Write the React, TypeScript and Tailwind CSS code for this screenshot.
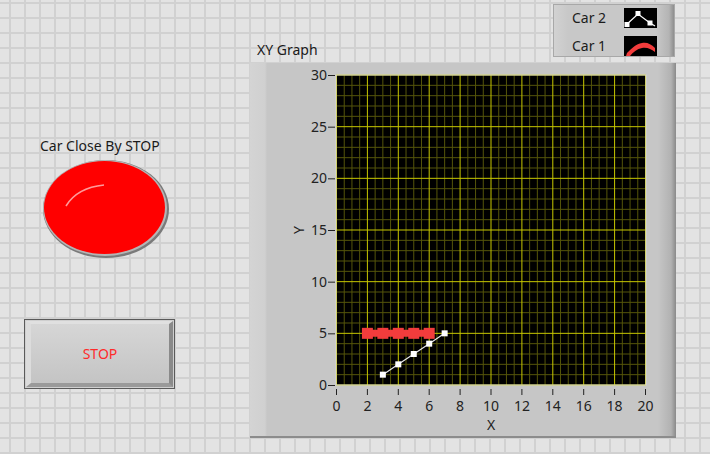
import React from "react";

const X = (v: number) => 336.5 + v * 15.45;
const Y = (v: number) => 385 - v * 10.333;

const car1 = [2, 3, 4, 5, 6].map((x) => [x, 5]);
const car2 = [
  [3, 1],
  [4, 2],
  [5, 3],
  [6, 4],
  [7, 5],
];

function Plot() {
  const minorX = Array.from({ length: 41 }, (_, i) => i * 0.5);
  const minorY = Array.from({ length: 31 }, (_, i) => i);
  const yTicks = [0, 5, 10, 15, 20, 25, 30];
  const xTicks = [0, 2, 4, 6, 8, 10, 12, 14, 16, 18, 20];
  return (
    <svg
      className="absolute inset-0"
      width={424}
      height={374}
      viewBox="250 63 424 374"
      style={{ fontFamily: '"Noto Sans", "Open Sans", sans-serif' }}
    >
      <rect x={336} y={75} width={310} height={310} fill="#000" />
      {minorX.map((v) =>
        v % 2 === 0 ? null : (
          <line key={"mx" + v} x1={X(v)} x2={X(v)} y1={75} y2={385} stroke="#55550a" strokeWidth={1} />
        )
      )}
      {minorY.map((v) =>
        v % 5 === 0 ? null : (
          <line key={"my" + v} y1={Y(v)} y2={Y(v)} x1={336} x2={646} stroke="#55550a" strokeWidth={1} />
        )
      )}
      {xTicks.map((v) => (
        <line key={"Mx" + v} x1={X(v)} x2={X(v)} y1={75} y2={385} stroke="#c8c800" strokeWidth={1} />
      ))}
      {yTicks.map((v) => (
        <line key={"My" + v} y1={Y(v)} y2={Y(v)} x1={336} x2={646} stroke="#c8c800" strokeWidth={1} />
      ))}
      <rect x={336} y={75} width={310} height={310} fill="none" stroke="#d8d8d8" strokeWidth={1} />

      {/* Car 1 */}
      <polyline
        points={car1.map(([x, y]) => `${X(x)},${Y(y)}`).join(" ")}
        fill="none"
        stroke="#f23c3c"
        strokeWidth={7}
      />
      {car1.map(([x, y]) => (
        <rect key={"c1" + x} x={X(x) - 5.5} y={Y(y) - 5.5} width={11} height={11} fill="#f23c3c" />
      ))}

      {/* Car 2 */}
      <polyline
        points={car2.map(([x, y]) => `${X(x)},${Y(y)}`).join(" ")}
        fill="none"
        stroke="#e8e8e8"
        strokeWidth={1.2}
      />
      {car2.map(([x, y]) => (
        <rect key={"c2" + x} x={X(x) - 3} y={Y(y) - 3} width={6} height={6} fill="#fff" />
      ))}

      {/* Y axis */}
      {yTicks.map((v) => (
        <g key={"yt" + v}>
          <line x1={328} x2={335} y1={Y(v) + 0.5} y2={Y(v) + 0.5} stroke="#222" strokeWidth={1} />
          <text x={327} y={Y(v) + 5} fontSize={14} textAnchor="end" fill="#222">
            {v}
          </text>
        </g>
      ))}
      {/* X axis */}
      {xTicks.map((v) => (
        <g key={"xt" + v}>
          <line x1={X(v)} x2={X(v)} y1={389} y2={395} stroke="#222" strokeWidth={1} />
          <text x={X(v)} y={411} fontSize={14} textAnchor="middle" fill="#222">
            {v}
          </text>
        </g>
      ))}
      <text x={491} y={430} fontSize={14} textAnchor="middle" fill="#222">
        X
      </text>
      <text
        x={298}
        y={230}
        fontSize={14}
        textAnchor="middle"
        dominantBaseline="central"
        fill="#222"
        transform="rotate(-90 298 230)"
      >
        Y
      </text>
    </svg>
  );
}

function Legend() {
  return (
    <div className="absolute left-[553px] top-[4px] w-[122px] h-[53px] border border-[#a8a8a8] [background-image:linear-gradient(to_right,#d2d2d2_0,#c8c8c8_14px,#c8c8c8_calc(100%-18px),#b4b4b4_calc(100%-5px),#8e8e8e_100%)] flex flex-col pl-[18px] pr-[17px] pt-[2px] gap-[7px]">
      <div className="flex items-center justify-between h-[21px]">
        <span className="text-[14px] text-[#1c1c1c]">Car 2</span>
        <svg width={33} height={20} viewBox="0 0 33 20">
          <rect width={33} height={20} fill="#000" />
          <polyline points="2,17 14,6 26,15 31,18" fill="none" stroke="#fff" strokeWidth={1.2} />
          <rect x={0.5} y={14} width={5} height={5} fill="#fff" />
          <rect x={11.5} y={3} width={5} height={5} fill="#fff" />
          <rect x={23.5} y={12.5} width={5} height={5} fill="#fff" />
        </svg>
      </div>
      <div className="flex items-center justify-between h-[21px]">
        <span className="text-[14px] text-[#1c1c1c]">Car 1</span>
        <svg width={33} height={20} viewBox="0 0 33 20">
          <rect width={33} height={20} fill="#000" />
          <path d="M2,20 L3,17 C8,12 12,8 18,7 C23,6 27,8 31,12 L31,16 C27,13 23,11 18,12 C13,13 9,16 6,20 Z" fill="#f23c3c" />
        </svg>
      </div>
    </div>
  );
}

export default function App() {
  return (
    <div
      className="relative w-[710px] h-[454px] overflow-hidden bg-[#e3e3e3] [background-image:linear-gradient(to_right,#d1d1d1_2px,transparent_2px),linear-gradient(to_bottom,#d1d1d1_2px,transparent_2px)] [background-size:15px_15px] [background-position:9px_2px]"
      style={{ fontFamily: '"Noto Sans", "Open Sans", sans-serif' }}
    >
      {/* LED indicator */}
      <div className="absolute left-[40px] top-[137px] flex flex-col gap-[2px]">
        <span className="text-[14px] leading-[18px] text-[#1a1a1a]">Car Close By STOP</span>
        <svg width={132} height={104} viewBox="40 157 132 104">
          <ellipse cx={106} cy={209} rx={63} ry={49} fill="#7a7a7a" />
          <ellipse cx={105} cy={208} rx={62} ry={48} fill="#b5b5b5" />
          <ellipse cx={104.5} cy={207.5} rx={60.5} ry={46.5} fill="#ff0000" />
          <path d="M66,206 C72,196 84,187 104,185" fill="none" stroke="#ff9a9a" strokeWidth={1.6} />
        </svg>
      </div>

      {/* STOP button */}
      <div className="absolute left-[24px] top-[319px] w-[151px] h-[70px] border border-[#5a5a5a] bg-[#cfcfcf] p-[1px]">
        <div className="w-full h-full border-t-[3px] border-l-[5px] border-r-[4px] border-b-[4px] border-t-[#e0e0e0] border-l-[#dcdcdc] border-r-[#8a8a8a] border-b-[#9a9a9a] [background-image:linear-gradient(to_bottom,#d6d6d6,#c4c4c4)] flex items-center justify-center">
          <span className="text-[14px] text-[#ff2a2a]">STOP</span>
        </div>
      </div>

      {/* XY Graph */}
      <div className="absolute left-[250px] top-[41px] flex flex-col gap-[4px]">
        <span className="pl-[7px] text-[14px] leading-[18px] text-[#1a1a1a]">XY Graph</span>
        <div className="relative w-[426px] h-[375px] border-b-2 border-b-[#8c8c8c] [background-image:linear-gradient(to_right,#d4d4d4_0,#d0d0d0_15px,#c6c6c6_17px,#c6c6c6_calc(100%-18px),#b2b2b2_calc(100%-5px),#8a8a8a_100%)]">
          <Plot />
        </div>
      </div>

      <Legend />
    </div>
  );
}
